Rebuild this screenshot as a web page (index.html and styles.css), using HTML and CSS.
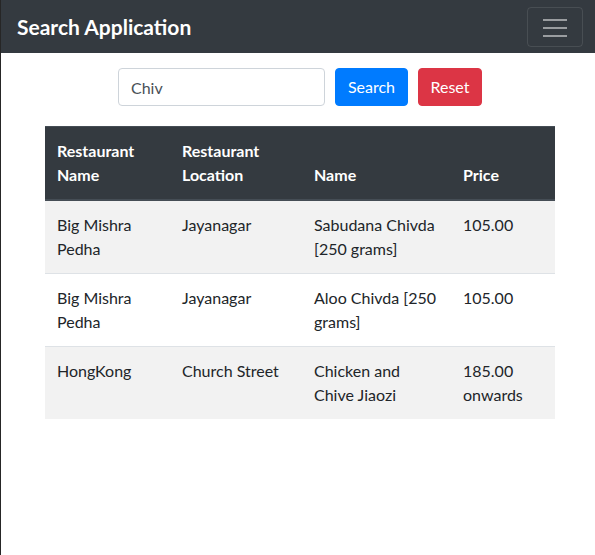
FILE: index.html
```html
<!DOCTYPE html>
<html lang="en">
<head>
<meta charset="utf-8">
<title>Search Application</title>
<link rel="stylesheet" href="styles.css">
</head>
<body>
<nav class="navbar">
  <span class="brand">Search Application</span>
  <button class="toggler" type="button" aria-label="Toggle navigation">
    <svg width="24" height="20" viewBox="0 0 24 20" aria-hidden="true">
      <path d="M0 3h24M0 11h24M0 19h24" stroke="rgba(255,255,255,0.5)" stroke-width="2"/>
    </svg>
  </button>
</nav>
<main class="content">
  <form class="search-form">
    <input class="search-input" type="text" value="Chiv">
    <button class="btn btn-primary" type="button">Search</button>
    <button class="btn btn-danger" type="button">Reset</button>
  </form>
  <table class="results">
    <colgroup>
      <col class="c1"><col class="c2"><col class="c3"><col class="c4">
    </colgroup>
    <thead>
      <tr>
        <th>Restaurant Name</th>
        <th>Restaurant Location</th>
        <th>Name</th>
        <th>Price</th>
      </tr>
    </thead>
    <tbody>
      <tr>
        <td>Big Mishra Pedha</td>
        <td>Jayanagar</td>
        <td>Sabudana Chivda [250 grams]</td>
        <td>105.00</td>
      </tr>
      <tr>
        <td>Big Mishra Pedha</td>
        <td>Jayanagar</td>
        <td>Aloo Chivda [250 grams]</td>
        <td>105.00</td>
      </tr>
      <tr>
        <td>HongKong</td>
        <td>Church Street</td>
        <td>Chicken and Chive Jiaozi</td>
        <td>185.00 onwards</td>
      </tr>
    </tbody>
  </table>
</main>
</body>
</html>
```
FILE: styles.css
```css
* { box-sizing: border-box; }
html, body { margin: 0; padding: 0; }
body {
  font-family: "Lato", "Noto Sans", sans-serif;
  font-size: 16px;
  line-height: 24px;
  color: #212529;
  background: #fff;
  border-left: 1px solid #262626;
  min-height: 555px;
}
.navbar {
  height: 53px;
  background: #343a40;
  display: flex;
  align-items: center;
  justify-content: space-between;
  padding: 0 12px 0 16px;
}
.brand {
  color: #fff;
  font-size: 21px;
  font-weight: 700;
  line-height: 30px;
  padding-top: 1px;
}
.toggler {
  width: 56px;
  height: 40px;
  background: transparent;
  border: 1px solid rgba(255,255,255,0.1);
  border-radius: 4px;
  display: flex;
  align-items: center;
  justify-content: center;
  padding: 0;
}
.content {
  padding: 15px 40px 0 44px;
}
.search-form {
  display: flex;
  justify-content: center;
  gap: 10px;
  margin: 0 0 20px;
}
.search-input {
  width: 207px;
  height: 38px;
  padding: 6px 12px;
  border: 1px solid #ced4da;
  border-radius: 4px;
  font: inherit;
  color: #495057;
}
.btn {
  height: 38px;
  padding: 0;
  border: 1px solid transparent;
  border-radius: 4px;
  font: inherit;
  color: #fff;
}
.btn-primary { background: #007bff; border-color: #007bff; width: 73px; }
.btn-danger { background: #dc3545; border-color: #dc3545; width: 64px; }
.results {
  width: 100%;
  table-layout: fixed;
  border-collapse: collapse;
}
.c1 { width: 125px; }
.c2 { width: 132px; }
.c3 { width: 149px; }
.c4 { width: 104px; }
.results th {
  background: #343a40;
  color: #fff;
  font-weight: 700;
  text-align: left;
  vertical-align: bottom;
  padding: 12px;
  border-top: 1px solid #454d55;
  border-bottom: 2px solid #454d55;
}
.results td {
  padding: 12px;
  vertical-align: top;
  border-top: 1px solid #dee2e6;
}
.results tbody tr:nth-child(odd) { background: #f2f2f2; }
```
